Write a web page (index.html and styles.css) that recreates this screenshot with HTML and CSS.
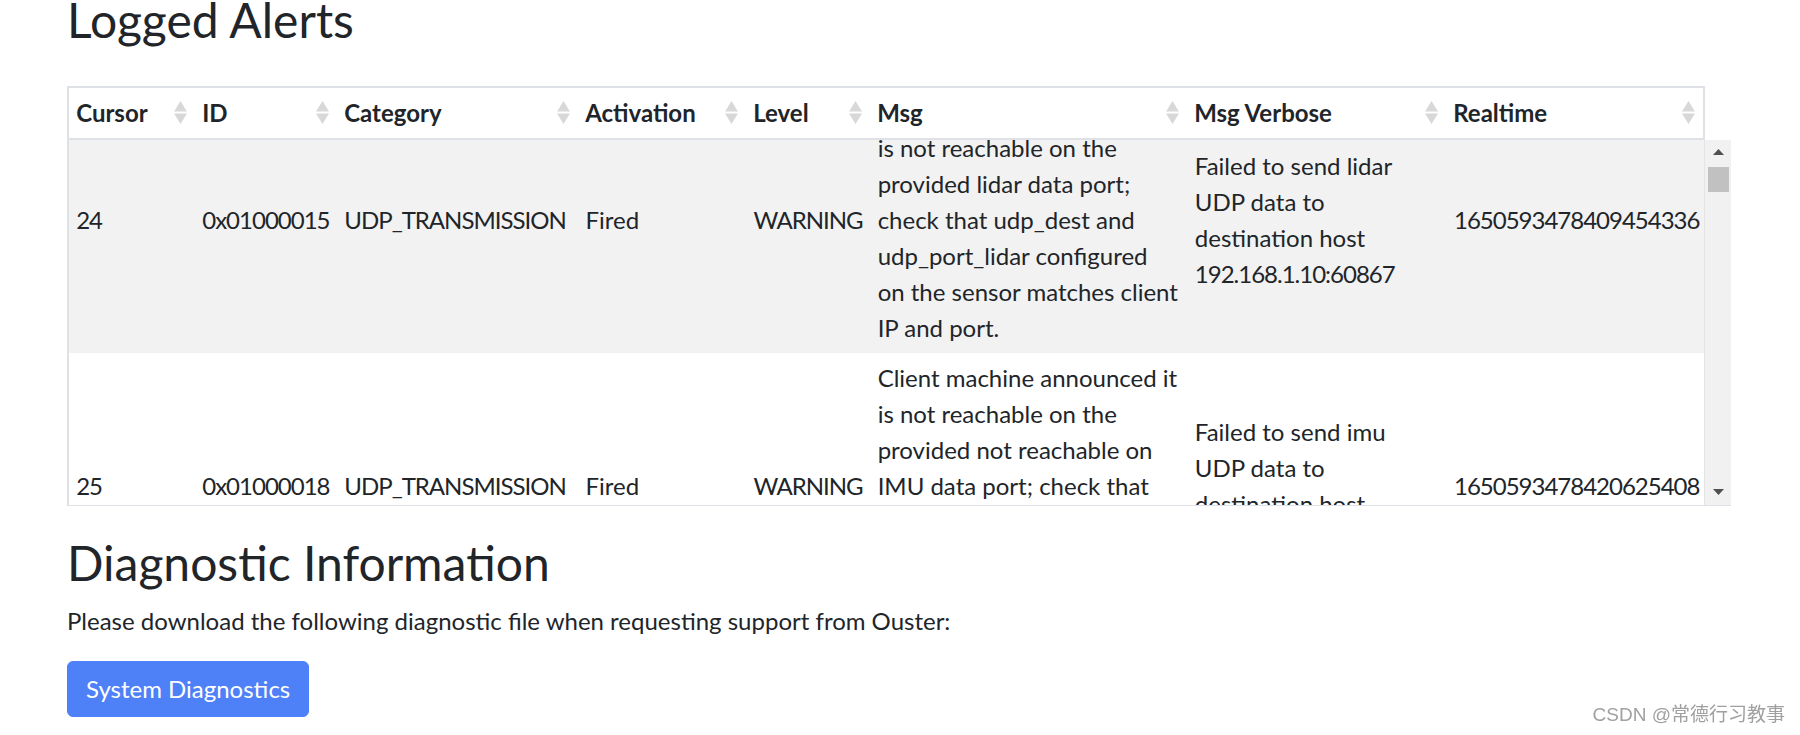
FILE: index.html
```html
<!DOCTYPE html>
<html lang="en">
<head>
<meta charset="utf-8">
<title>Logged Alerts</title>
<link rel="stylesheet" href="styles.css">
</head>
<body>
<div class="page">
  <h2 class="title first">Logged Alerts</h2>

  <div class="dt">
    <div class="dt-head">
      <table class="grid">
        <colgroup>
          <col class="c-cursor"><col class="c-id"><col class="c-cat"><col class="c-act"><col class="c-level"><col class="c-msg"><col class="c-verb"><col class="c-real">
        </colgroup>
        <thead>
          <tr>
            <th><div class="th-in"><span>Cursor</span><svg class="sort" viewBox="0 0 13 23"><path d="M6.5 0L13 10.4H0Z"/><path d="M0 12.6H13L6.5 23Z"/></svg></div></th>
            <th><div class="th-in"><span>ID</span><svg class="sort" viewBox="0 0 13 23"><path d="M6.5 0L13 10.4H0Z"/><path d="M0 12.6H13L6.5 23Z"/></svg></div></th>
            <th><div class="th-in"><span>Category</span><svg class="sort" viewBox="0 0 13 23"><path d="M6.5 0L13 10.4H0Z"/><path d="M0 12.6H13L6.5 23Z"/></svg></div></th>
            <th><div class="th-in"><span>Activation</span><svg class="sort" viewBox="0 0 13 23"><path d="M6.5 0L13 10.4H0Z"/><path d="M0 12.6H13L6.5 23Z"/></svg></div></th>
            <th><div class="th-in"><span>Level</span><svg class="sort" viewBox="0 0 13 23"><path d="M6.5 0L13 10.4H0Z"/><path d="M0 12.6H13L6.5 23Z"/></svg></div></th>
            <th><div class="th-in"><span>Msg</span><svg class="sort" viewBox="0 0 13 23"><path d="M6.5 0L13 10.4H0Z"/><path d="M0 12.6H13L6.5 23Z"/></svg></div></th>
            <th><div class="th-in"><span>Msg Verbose</span><svg class="sort" viewBox="0 0 13 23"><path d="M6.5 0L13 10.4H0Z"/><path d="M0 12.6H13L6.5 23Z"/></svg></div></th>
            <th><div class="th-in"><span>Realtime</span><svg class="sort" viewBox="0 0 13 23"><path d="M6.5 0L13 10.4H0Z"/><path d="M0 12.6H13L6.5 23Z"/></svg></div></th>
          </tr>
        </thead>
      </table>
    </div>

    <div class="dt-body">
      <div class="dt-clip">
        <table class="grid rows">
          <colgroup>
            <col class="c-cursor"><col class="c-id"><col class="c-cat"><col class="c-act"><col class="c-level"><col class="c-msg"><col class="c-verb"><col class="c-real">
          </colgroup>
          <tbody>
            <tr class="odd">
              <td class="tight">24</td>
              <td class="tight">0x01000015</td>
              <td class="tight">UDP_TRANSMISSION</td>
              <td>Fired</td>
              <td class="tight">WARNING</td>
              <td>Client machine announced it<br>is not reachable on the<br>provided lidar data port;<br>check that udp_dest and<br>udp_port_lidar configured<br>on the sensor matches client<br>IP and port.</td>
              <td>Failed to send lidar<br>UDP data to<br>destination host<br><span class="tight">192.168.1.10:60867</span></td>
              <td class="tight">1650593478409454336</td>
            </tr>
            <tr class="even">
              <td class="tight">25</td>
              <td class="tight">0x01000018</td>
              <td class="tight">UDP_TRANSMISSION</td>
              <td>Fired</td>
              <td class="tight">WARNING</td>
              <td>Client machine announced it<br>is not reachable on the<br>provided not reachable on<br>IMU data port; check that<br>udp_dest and udp_port_imu<br>configured on the sensor<br>matches client IP and port.</td>
              <td>Failed to send imu<br>UDP data to<br>destination host<br><span class="tight">192.168.1.10:60867</span></td>
              <td class="tight">1650593478420625408</td>
            </tr>
          </tbody>
        </table>
      </div>
      <div class="sbar">
        <div class="sb-btn"><svg viewBox="0 0 11 6"><path d="M5.5 0L11 6H0Z"/></svg></div>
        <div class="sb-track"><div class="sb-thumb"></div></div>
        <div class="sb-btn"><svg viewBox="0 0 11 6"><path d="M0 0H11L5.5 6Z"/></svg></div>
      </div>
    </div>
  </div>

  <h2 class="title second">Diagnostic Information</h2>
  <p class="lead">Please download the following diagnostic file when requesting support from Ouster:</p>
  <button class="btn" type="button">System Diagnostics</button>
</div>
<div class="watermark">CSDN @常德行习教事</div>
</body>
</html>
```

FILE: styles.css
```css
html, body {
  margin: 0;
  padding: 0;
  background: #ffffff;
}

body {
  font-family: Lato, "Noto Sans", "Liberation Sans", sans-serif;
  font-size: 24px;
  line-height: 36px;
  color: #212529;
  overflow: hidden;
}

.page {
  padding-left: 67px;
  width: 1664px;
}

.title {
  font-size: 48px;
  font-weight: 400;
  line-height: 57.6px;
  margin: 0 0 12px 0;
}

.first {
  margin-top: -9px;
}

.dt {
  margin-top: 37px;
  width: 1664px;
}

.dt-head {
  width: 1638px;
  box-sizing: border-box;
  border: 2px solid #dee2e6;
  border-bottom: 0;
}

.grid {
  width: 100%;
  table-layout: fixed;
  border-collapse: collapse;
}

.c-cursor { width: 126px; }
.c-id { width: 142px; }
.c-cat { width: 241px; }
.c-act { width: 168px; }
.c-level { width: 124px; }
.c-msg { width: 317px; }
.c-verb { width: 259px; }
.c-real { width: 257px; }

.grid th {
  padding: 7px 8px 7px 7.2px;
  text-align: left;
  font-weight: 700;
  vertical-align: bottom;
  border-bottom: 2px solid #dee2e6;
  white-space: nowrap;
}

.th-in {
  display: flex;
  justify-content: space-between;
  align-items: center;
}

.sort {
  width: 13px;
  height: 23px;
  fill: #d8d8d8;
  flex: none;
}

.dt-body {
  display: flex;
  height: 366px;
  border-bottom: 1px solid #dee2e6;
  box-sizing: border-box;
}

.dt-clip {
  width: 1638px;
  box-sizing: border-box;
  border-left: 2px solid #dee2e6;
  border-right: 1px solid #e4e4e4;
  overflow: hidden;
}

.rows {
  margin-top: -53px;
}

.rows td {
  padding: 7.2px;
  vertical-align: middle;
  white-space: nowrap;
  overflow: hidden;
}

.tight {
  letter-spacing: -1px;
}

.rows tr.odd td {
  background: #f2f2f2;
}

.rows tr.even td {
  background: #ffffff;
}

.sbar {
  width: 26px;
  display: flex;
  flex-direction: column;
  background: #f1f1f1;
}

.sb-btn {
  height: 25px;
  display: flex;
  align-items: center;
  justify-content: center;
}

.sb-btn svg {
  width: 11px;
  height: 6px;
  fill: #505050;
}

.sb-track {
  flex: 1;
  padding: 2px 2px 2px 3px;
}

.sb-thumb {
  height: 25px;
  background: #c1c1c1;
}

.second {
  margin-top: 28px;
}

.lead {
  margin: 0 0 22px 0;
}

.btn {
  font-family: inherit;
  font-size: 24px;
  line-height: 36px;
  color: #ffffff;
  background: #4e80f8;
  border: 1px solid #4e80f8;
  border-radius: 6px;
  padding: 9px 18px;
  cursor: pointer;
}

.watermark {
  position: fixed;
  right: 15px;
  bottom: 9px;
  font-family: "Liberation Sans", "Noto Sans CJK SC", sans-serif;
  font-size: 19px;
  line-height: 22px;
  color: #a0a0a0;
}
```
